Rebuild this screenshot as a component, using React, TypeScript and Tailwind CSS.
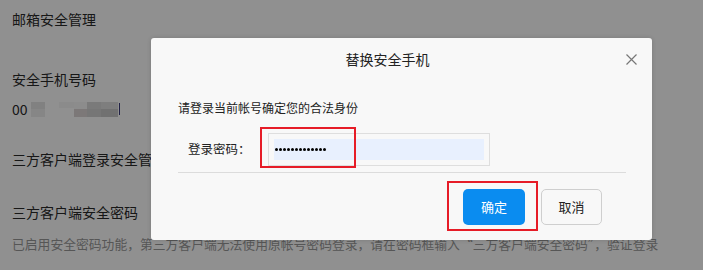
import React from "react";

const font = { fontFamily: '"Noto Sans CJK SC", "Noto Sans", sans-serif' };

export default function App() {
  const dots = Array.from({ length: 13 });
  return (
    <div
      className="relative w-[703px] h-[270px] overflow-hidden bg-white text-[#2a2a2a]"
      style={font}
    >
      {/* page content */}
      <div className="flex flex-col pl-[12px] pt-[9px]">
        <div className="text-[14px] leading-[20px]">邮箱安全管理</div>
        <div className="mt-[40px] text-[14px] leading-[20px]">安全手机号码</div>
        <div className="mt-[10px] flex items-center h-[20px] text-[14px] leading-[20px]">
          <span>00</span>
          <div className="ml-[3px] flex h-[15px]">
            <div className="w-[14px] h-[15px] flex flex-col">
              <div className="h-[7px] bg-[#e4e4e4]" />
              <div className="h-[8px] bg-[#eeeeee]" />
            </div>
            <div className="w-[14px]" />
            <div className="w-[15px] flex flex-col">
              <div className="h-[6px] bg-[#f6f6f6]" />
            </div>
            <div className="w-[13px] flex flex-col">
              <div className="h-[7px] bg-[#f8f8f8]" />
              <div className="h-[8px] bg-[#dcd4d4]" />
            </div>
            <div className="w-[14px] flex flex-col">
              <div className="h-[7px] bg-[#d8d8d8]" />
              <div className="h-[8px] bg-[#d2d2d2]" />
            </div>
            <div className="w-[17px] flex flex-col">
              <div className="h-[7px] bg-[#e0e0e0]" />
              <div className="h-[8px] bg-[#c8c8c8]" />
            </div>
            <div className="ml-[1px] w-[1px] h-[12px] mt-[1px] bg-[#3a3a7a]" />
          </div>
        </div>
        <div className="mt-[30px] text-[14px] leading-[20px]">三方客户端登录安全管理</div>
        <div className="mt-[33px] text-[14px] leading-[20px]">三方客户端安全密码</div>
        <div className="mt-[12px] text-[12.8px] leading-[20px] text-[#999] whitespace-nowrap">
          已启用安全密码功能，第三方客户端无法使用原帐号密码登录，请在密码框输入“三方客户端安全密码”，验证登录
        </div>
      </div>

      {/* overlay */}
      <div className="absolute inset-0 bg-black/[0.435]" />

      {/* dialog */}
      <div className="absolute left-[151px] top-[38px] w-[501px] h-[202px] rounded-[3px] bg-[#f8f8f8] shadow-[0_0_4px_rgba(0,0,0,0.15)] flex flex-col">
        <div className="relative h-[42px] flex items-center justify-center pr-[28px]">
          <span className="text-[14px] text-[#222]">替换安全手机</span>
          <button className="absolute right-[15px] top-[16px] w-[11px] h-[11px] text-[#777]">
            <svg viewBox="0 0 11 11" width="11" height="11" fill="none" stroke="currentColor" strokeWidth="1.2">
              <path d="M0.5 0.5 L10.5 10.5 M10.5 0.5 L0.5 10.5" />
            </svg>
          </button>
        </div>
        <div className="flex flex-col pl-[27px] pr-[26px]">
          <div className="mt-[19px] text-[12px] leading-[18px] text-[#222]">请登录当前帐号确定您的合法身份</div>
          <div className="relative mt-[16px] flex items-center h-[33px] pl-[10px]">
            <span className="text-[12.5px] text-[#222] w-[80px]">登录密码：</span>
            <div className="w-[222px] h-[33px] border border-[#dedede] p-[5px]">
              <div className="h-full bg-[#e8f0fe] flex items-center gap-[1px] pl-[1px]">
                {dots.map((_, i) => (
                  <span key={i} className="w-[3px] h-[3px] rounded-full bg-black" />
                ))}
              </div>
            </div>
            <div className="absolute left-[82px] top-[-6px] w-[96px] h-[41px] border-2 border-[#e61c27]" />
          </div>
          <div className="mt-[6px] h-px bg-[#dcdcdc]" />
          <div className="relative mt-[16px] flex justify-end gap-[16px] pr-[24px]">
            <button className="w-[62px] h-[36px] rounded-[5px] bg-[#0a8cf0] text-white text-[13px]">确定</button>
            <button className="w-[61px] h-[36px] rounded-[5px] border border-[#cfcfcf] bg-[#f8f8f8] text-[#222] text-[13px]">取消</button>
            <div className="absolute left-[269px] top-[-8px] w-[91px] h-[50px] border-2 border-[#e61c27]" />
          </div>
        </div>
      </div>
    </div>
  );
}
